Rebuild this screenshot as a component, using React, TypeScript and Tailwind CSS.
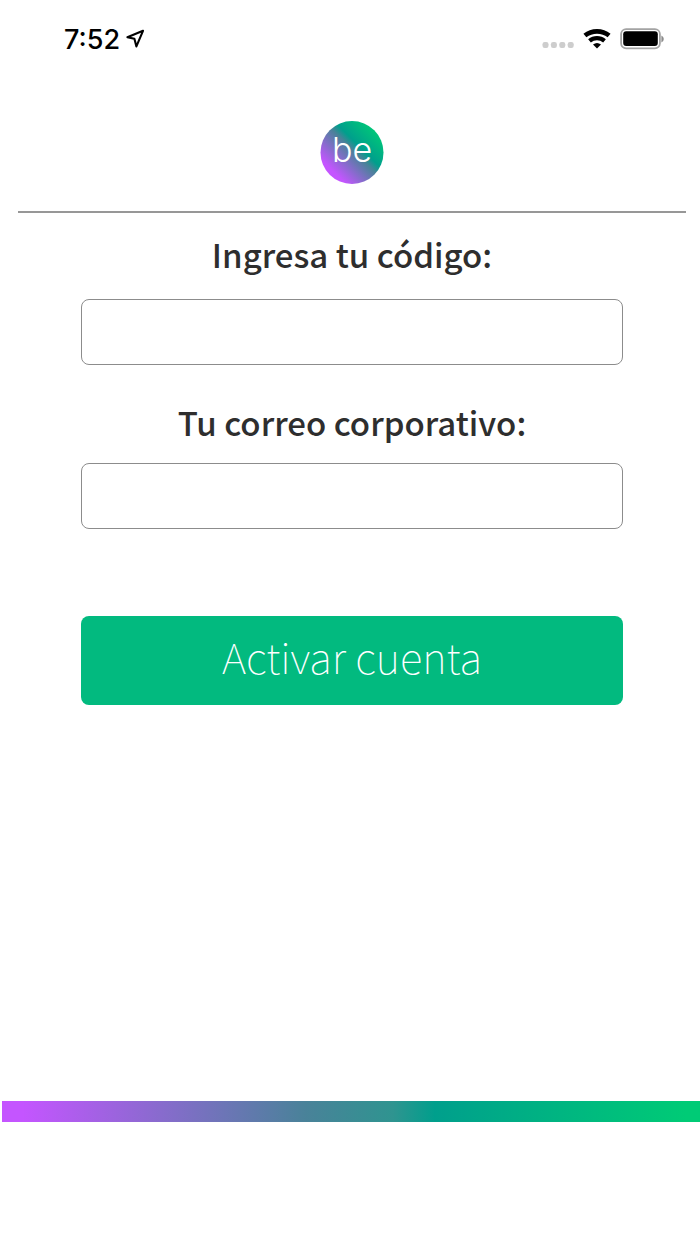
import type { ReactNode } from "react";

const sourceFont = "font-['Noto_Sans_CJK_SC','Noto_Sans',sans-serif]";

function StatusBar() {
  return (
    <header className="flex h-[78px] items-center justify-between pr-[34px] pl-16">
      <div className="flex items-center gap-1.5">
        <time className="pt-px font-['Inter',sans-serif] text-[27px] leading-8 font-medium text-black">7:52</time>
        <svg className="h-5 w-5" viewBox="0 0 20 20" fill="none" stroke="#000" strokeWidth="2.1" strokeLinejoin="round" aria-label="Ubicación">
          <path d="M17 1.8 1.4 8.2 8.4 9.8 10.4 17.4Z" />
        </svg>
      </div>
      <div className="flex items-center">
        <svg className="mt-3 h-2 w-8" viewBox="0 0 32 8" fill="#cdcdcd" aria-label="Sin señal">
          <rect x="0.5" y="1" width="6" height="6" rx="2.2" />
          <rect x="8.9" y="1" width="6" height="6" rx="2.2" />
          <rect x="17.3" y="1" width="6" height="6" rx="2.2" />
          <rect x="25.7" y="1" width="6" height="6" rx="2.2" />
        </svg>
        <svg className="ml-[9px] h-5 w-7" viewBox="0 0 28 20" fill="none" stroke="#000" aria-label="Wi-Fi">
          <path d="M1.9 6.6C8.8 0.9 19.2 0.9 26.1 6.6" strokeWidth="4.6" />
          <path d="M6.5 11.9C10.9 8.2 17.1 8.2 21.5 11.9" strokeWidth="4.2" />
          <path d="M10 15.5Q14 12.3 18 15.5L14 19.4Z" fill="#000" stroke="none" />
        </svg>
        <svg className="ml-[9px] h-[22px] w-[46px]" viewBox="0 0 46 22" aria-label="Batería">
          <rect x="1.1" y="1.1" width="38.8" height="19.2" rx="5" fill="none" stroke="#a3a3a3" strokeWidth="1.8" />
          <rect x="3.2" y="3.3" width="34.6" height="14.8" rx="3" fill="#000" />
          <path d="M41.4 7.5Q43.8 8.5 43.8 11T41.4 14.5Z" fill="#8c8c8c" />
        </svg>
      </div>
    </header>
  );
}

function Logo() {
  return (
    <svg className="ml-1 h-16 w-16 self-center" viewBox="0 0 64 64" role="img" aria-label="be">
      <defs>
        <linearGradient id="brand" x1="0" y1="64" x2="64" y2="0" gradientUnits="userSpaceOnUse">
          <stop offset="0.2" stopColor="#c455ff" />
          <stop offset="0.52" stopColor="#498299" />
          <stop offset="0.6" stopColor="#009f8c" />
          <stop offset="0.86" stopColor="#00c878" />
        </linearGradient>
      </defs>
      <circle cx="32" cy="32.5" r="31.5" fill="url(#brand)" />
      <text x="32" y="42" textAnchor="middle" className="font-['Inter',sans-serif] text-[34px] font-light" fill="#fff">
        be
      </text>
    </svg>
  );
}

function Field({ id, type, children }: { id: string; type: string; children: ReactNode }) {
  return (
    <div className="flex flex-col">
      <label htmlFor={id} className={`${sourceFont} text-center text-[33px] leading-[50px] font-medium text-[#2e2e2e]`}>
        {children}
      </label>
      <input
        id={id}
        type={type}
        className={`${id === "codigo" ? "mt-5" : "mt-4"} h-[66px] w-full rounded-lg border border-[#8c8c8c] bg-white px-4 text-2xl outline-none`}
      />
    </div>
  );
}

export default function App() {
  return (
    <div className="flex min-h-screen flex-col bg-white">
      <StatusBar />
      <main className="flex flex-col">
        <div className="flex flex-col pt-[42px]">
          <Logo />
        </div>
        <hr className="mt-[27px] mr-3.5 ml-[18px] border-t-2 border-[#979797]" />
        <form className="flex flex-col pt-4 pr-[77px] pl-[81px]" onSubmit={(event) => event.preventDefault()}>
          <div className="flex flex-col gap-8">
            <Field id="codigo" type="text">Ingresa tu código:</Field>
            <Field id="correo" type="email">Tu correo corporativo:</Field>
          </div>
          <button type="submit" className={`${sourceFont} mt-[87px] h-[89px] rounded-lg bg-[#02ba7f] pb-2.5 text-[42px] leading-none font-thin text-white`}>
            Activar cuenta
          </button>
        </form>
      </main>
      <footer className="mt-auto pb-[122px] pl-[2px]">
        <div className="h-[21px] bg-[linear-gradient(90deg,#c455ff_3%,#498299_43.5%,#2f9490_56%,#009f8c_62%,#00cb76_98%)]" />
      </footer>
    </div>
  );
}
